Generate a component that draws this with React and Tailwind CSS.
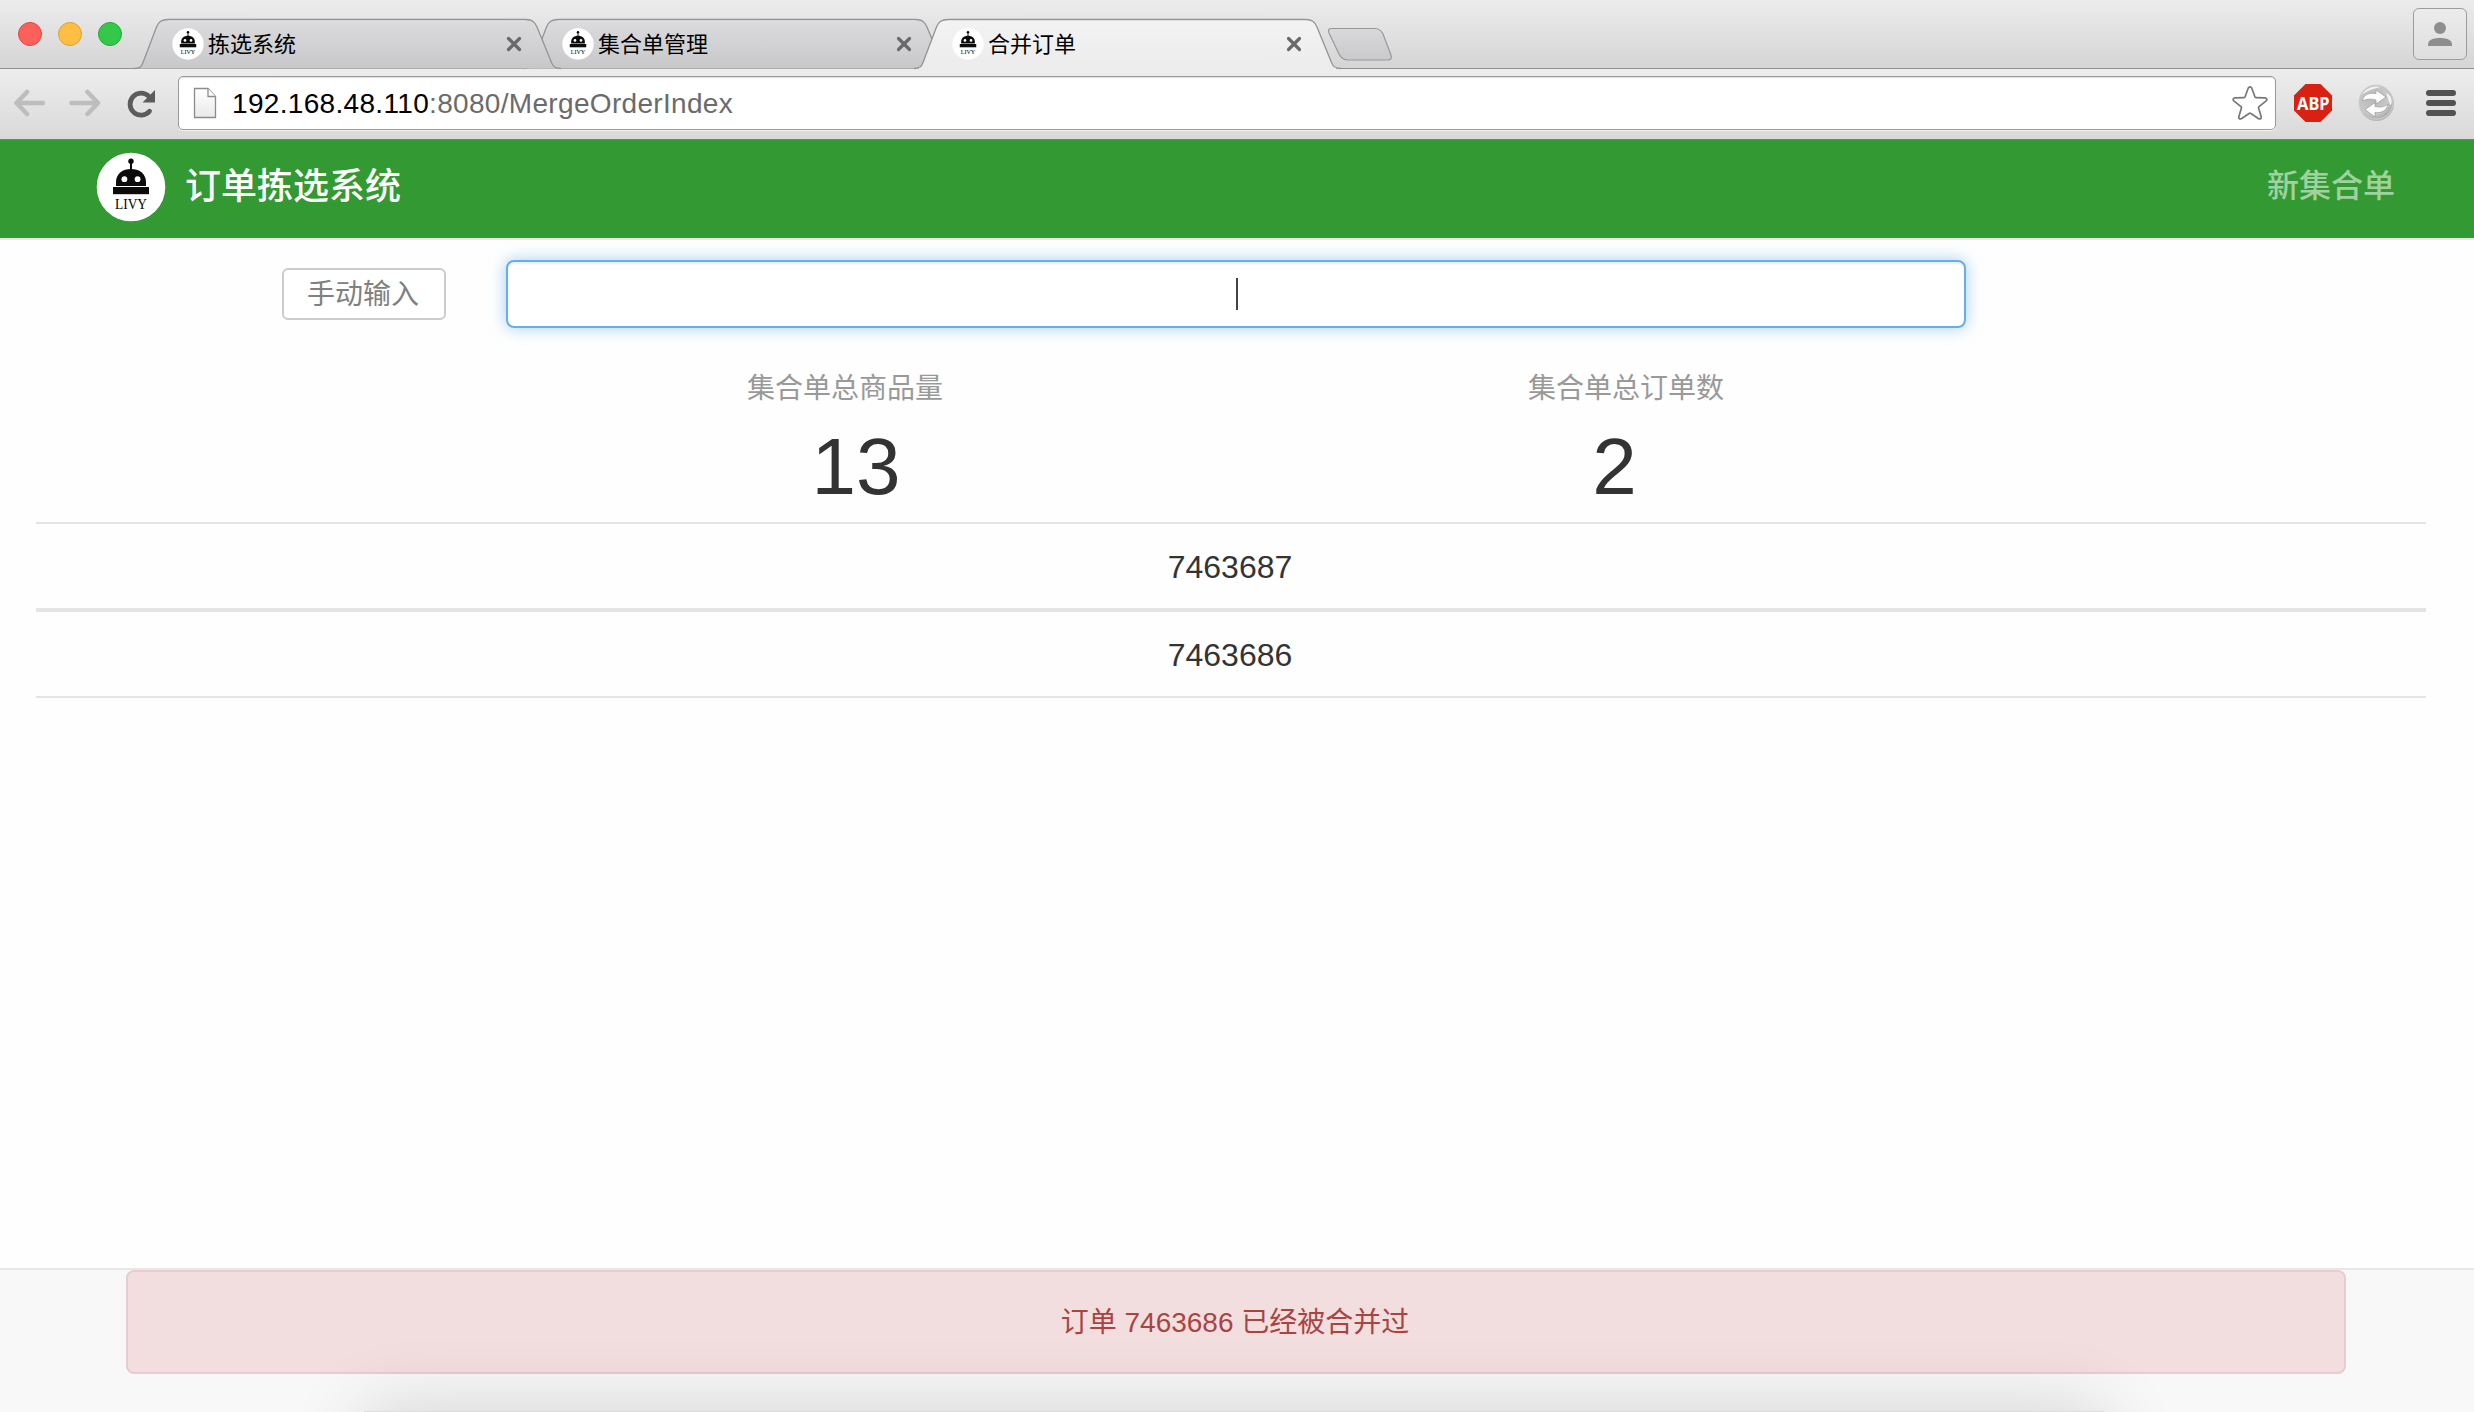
const CJK = "font-['Liberation_Sans','Noto_Sans_CJK_SC',sans-serif]";

function RobotLogo({ className }) {
  return (
    <svg viewBox="0 0 70 70" className={className}>
      <circle cx="35" cy="35" r="34.3" fill="#fff" />
      <circle cx="35" cy="9.3" r="2.7" fill="#0b0b0b" />
      <rect x="34" y="9" width="2" height="10" fill="#0b0b0b" />
      <path d="M20 34V30C20 21.500 27 17 35 17S50 21.500 50 30V34Z" fill="#0b0b0b" />
      <rect x="17" y="35" width="36" height="7.200" fill="#0b0b0b" />
      <circle cx="28.400" cy="27.200" r="2.900" fill="#fff" />
      <circle cx="41.600" cy="27.200" r="2.900" fill="#fff" />
      <text x="35" y="57" textAnchor="middle" fontSize="15" textLength="32" lengthAdjust="spacingAndGlyphs" fill="#000" fontFamily="Liberation Serif, serif">LIVY</text>
    </svg>
  );
}

const TAB_LINE = "M-4 49.5C2 49.5 3.500 47.500 5 43.500L18.500 8C20.800 2.500 23.500 .5 30 .5H388C394 .5 396.500 2.500 399 8L413.500 43.500C415 47.500 417 49.5 423 49.5";

function Tab({ title, active, layer }) {
  const id = active ? "tab-active" : "tab-idle";
  return (
    <div className={"relative flex h-[50px] w-[390px] shrink-0 items-center pl-[34px] " + layer}>
      <svg width="424" height="51" viewBox="0 0 424 51" className="absolute top-0 left-0 overflow-visible">
        <defs>
          <linearGradient id={id} x1="0" y1="0" x2="0" y2="1">
            <stop offset="0" stopColor={active ? "#f3f3f3" : "#dcdcde"} />
            <stop offset="1" stopColor={active ? "#ececec" : "#c8c8ca"} />
          </linearGradient>
        </defs>
        <path d={TAB_LINE + "Z"} fill={`url(#${id})`} />
        <path d="M30 1.800H388" stroke="#fff" strokeOpacity=".5" />
        <path d={TAB_LINE} fill="none" stroke="#949496" strokeWidth="1.300" />
        {active && <path d="M1 50H418" stroke="#ececec" strokeWidth="2.500" />}
      </svg>
      <RobotLogo className="relative size-8" />
      <span className="relative mt-px ml-1 w-[290px] text-[22px] leading-[22px] whitespace-nowrap text-black">{title}</span>
      <svg width="16" height="16" viewBox="0 0 16 16" className="relative ml-[8px] shrink-0">
        <path d="M2.500 2.500L13.500 13.500M13.500 2.500L2.500 13.500" stroke="#696969" strokeWidth="3.200" strokeLinecap="round" />
      </svg>
    </div>
  );
}

function TitleBar() {
  return (
    <div className="flex h-[69px] items-start border-b border-[#909090] bg-linear-to-b from-[#ececec] to-[#d5d5d5]">
      <div className="flex w-[138px] shrink-0 gap-4 pt-[22px] pl-[18px]">
        <div className="size-6 rounded-full border border-[#e2463f] bg-[#fc605b]" />
        <div className="size-6 rounded-full border border-[#dfa032] bg-[#fdbe41]" />
        <div className="size-6 rounded-full border border-[#1fab31] bg-[#34c84a]" />
      </div>
      <div className="isolate flex pt-[19px]">
        <Tab title="拣选系统" layer="z-20" />
        <Tab title="集合单管理" layer="z-10" />
        <Tab title="合并订单" active layer="z-30" />
      </div>
      <svg width="66" height="34" viewBox="0 0 66 34" className="mt-[27px] ml-[19px]">
        <defs>
          <linearGradient id="plus-tab" x1="0" y1="0" x2="0" y2="1">
            <stop offset="0" stopColor="#d9d9db" />
            <stop offset="1" stopColor="#cacacc" />
          </linearGradient>
        </defs>
        <path d="M4.500 1.500H47C52 1.500 54 3 56 7L64 28C65 31 64 33 61 33H21C16 33 14 31 12 27L2 6C1 3 1.500 1.500 4.500 1.500Z" fill="url(#plus-tab)" stroke="#98989a" strokeWidth="1.200" />
      </svg>
      <div className="mt-2 mr-[7px] ml-auto flex h-[52px] w-[54px] items-center justify-center rounded-md border border-[#9c9c9c] bg-linear-to-b from-[#ececec] to-[#dedede]">
        <svg width="24" height="24" viewBox="0 0 24 24" fill="#8e8e8e">
          <circle cx="12" cy="6" r="6" />
          <path d="M0 24V22.500C0 18 5 16 12 16S24 18 24 22.500V24Z" />
        </svg>
      </div>
    </div>
  );
}

function Toolbar() {
  return (
    <div className="flex h-[71px] items-start border-b border-[#7c7c7c] bg-linear-to-b from-[#ededed] to-[#d9d9d9]">
      <div className="flex w-[178px] shrink-0 pt-[20px] pl-[13px]">
        <svg width="32" height="28" viewBox="0 0 32 28" fill="none" stroke="#bdbdbd" strokeWidth="4.500" strokeLinecap="round" strokeLinejoin="round">
          <path d="M30 14H4M14 3L3.500 14L14 25" />
        </svg>
        <svg width="32" height="28" viewBox="0 0 32 28" className="ml-[24px]" fill="none" stroke="#bdbdbd" strokeWidth="4.500" strokeLinecap="round" strokeLinejoin="round">
          <path d="M2.500 14H28M18.500 3L29 14L18.500 25" />
        </svg>
        <svg width="30" height="30" viewBox="0 0 30 30" className="ml-[26px]">
          <path d="M22.500 22.200A11 11 0 1 1 21.500 7" fill="none" stroke="#5c5c5c" strokeWidth="4.800" strokeLinecap="round" />
          <path d="M28 1V13.500H15.500Z" fill="#5c5c5c" />
        </svg>
      </div>
      <div className="mt-[7px] flex h-[54px] w-[2098px] items-center rounded-[5px] border border-[#9a9a9a] bg-white shadow-[inset_0_1px_1px_#ddd,0_1px_0_#f2f2f2]">
        <svg width="24" height="32" viewBox="0 0 24 32" className="ml-[14px]">
          <defs>
            <linearGradient id="sheet" x1="0" y1="0" x2="0" y2="1">
              <stop offset="0" stopColor="#fff" />
              <stop offset="1" stopColor="#e9e9ec" />
            </linearGradient>
          </defs>
          <path d="M1.500 1.500H15L22.500 9.500V30.500H1.500Z" fill="url(#sheet)" stroke="#8c8c8c" strokeWidth="1.300" />
          <path d="M15 1.500V9.500H22.500" fill="#fff" stroke="#8c8c8c" strokeWidth="1.300" />
        </svg>
        <div className="mt-[2px] ml-[15px] text-[28px] leading-none tracking-[0.32px] whitespace-nowrap text-[#6b6b6b]">
          <span className="text-black">192.168.48.110</span>:8080/MergeOrderIndex
        </div>
        <svg width="36" height="36" viewBox="0 0 36 36" className="mr-[7px] ml-auto" fill="#fff" stroke="#777" strokeWidth="1.700" strokeLinejoin="round">
          <path d="M16.200 3.200C17 1.300 19 1.300 19.800 3.200L22.900 11.800C23.100 12.400 23.400 12.600 24 12.600L32.800 12.900C35 13 35.500 14.800 33.900 16.200L27 21.600C26.500 22 26.400 22.400 26.600 23L29.100 31.500C29.600 33.600 28.200 34.600 26.300 33.500L18.900 28.500C18.300 28.100 17.700 28.100 17.100 28.500L9.700 33.500C7.800 34.600 6.400 33.600 6.900 31.500L9.400 23C9.600 22.400 9.500 22 9 21.600L2.100 16.200C.5 14.800 1 13 3.200 12.900L12 12.600C12.600 12.600 12.900 12.400 13.100 11.800Z" />
        </svg>
      </div>
      <svg width="40" height="40" viewBox="0 0 40 40" className="mt-[14px] ml-[17px]">
        <path d="M12.500 1H27.500L39 12.500V27.500L27.500 39H12.500L1 27.500V12.500Z" fill="#d92113" />
        <text x="20.300" y="26.500" textAnchor="middle" fontSize="18" fontWeight="700" textLength="32.500" lengthAdjust="spacingAndGlyphs" fill="#fff" fontFamily="Noto Sans, sans-serif">ABP</text>
      </svg>
      <svg width="40" height="40" viewBox="0 0 40 40" className="mt-[13px] ml-[23px]">
        <defs>
          <radialGradient id="globe" cx=".42" cy=".4" r=".62">
            <stop offset="0" stopColor="#b8b8b8" />
            <stop offset=".75" stopColor="#c8c8c8" />
            <stop offset="1" stopColor="#a8a8a8" />
          </radialGradient>
        </defs>
        <circle cx="20.500" cy="21.500" r="17.500" fill="#a8a8a8" opacity=".7" />
        <circle cx="20" cy="20" r="17" fill="url(#globe)" stroke="#d0d0d0" />
        <path d="M6 13C9 6 18 3 25 5C19 6 12 8 6 13ZM30 11C35 13 37 18 35 23C33 22 33 18 30 11Z" fill="#f2f2f2" />
        <path d="M6.500 19C7 13 12 10.500 20 11.500V8L30 15L20 22V18C14 16.500 10 17 6.500 19Z" fill="#fcfcfc" stroke="#999" strokeWidth=".7" />
        <path d="M32 22C31.500 28 26 31.500 19 30.500V35L9 27.500L19 20.500V24.500C24 25.500 28.500 25 32 22Z" fill="#fcfcfc" stroke="#999" strokeWidth=".7" />
      </svg>
      <div className="mt-[21px] ml-[30px] flex w-[30px] flex-col gap-1">
        <div className="h-1.5 rounded-full bg-[#525252]" />
        <div className="h-1.5 rounded-full bg-[#525252]" />
        <div className="h-1.5 rounded-full bg-[#525252]" />
      </div>
    </div>
  );
}

function Stat({ label, value, className }) {
  return (
    <div className={"flex w-[200px] flex-col items-center " + className}>
      <div className="mt-px text-[28px] leading-[40px] whitespace-nowrap text-[#999]">{label}</div>
      <div className="mt-[14px] text-[80px] leading-[88px] text-[#333]">{value}</div>
    </div>
  );
}

export default function App() {
  return (
    <div className={"relative flex h-[1412px] w-[2474px] flex-col overflow-hidden bg-[#fefefe] " + CJK}>
      <TitleBar />
      <Toolbar />
      <header className="flex h-[100px] shrink-0 items-center border-b-2 border-[#e7e7e7] bg-[#339933] pr-[79px] pl-[96px]">
        <RobotLogo className="mt-[-4px] size-[70px]" />
        <h1 className="mt-[-4px] ml-[19px] text-[36px] leading-none font-medium text-white">订单拣选系统</h1>
        <a className="mt-[-7px] ml-auto text-[32px] leading-none font-medium text-[#a0d2a0]">新集合单</a>
      </header>

      <main className="flex flex-1 flex-col">
        <div className="mt-[20px] flex h-[68px] items-center pl-[282px]">
          <button className="flex h-[52px] w-[164px] items-center justify-center rounded-md border-2 border-[#ccc] bg-white pt-[2px] pr-[2px] text-[28px] leading-none text-[#808080]">手动输入</button>
          <div className="ml-[60px] flex h-[68px] w-[1460px] items-center justify-center rounded-lg border-2 border-[#66afe9] bg-white pl-[2px] shadow-[inset_0_2px_2px_rgba(0,0,0,0.075),0_0_16px_rgba(102,175,233,0.6)]">
            <div className="h-8 w-0.5 bg-[#444]" />
          </div>
        </div>

        <div className="mt-[40px] flex h-[154px]">
          <Stat label="集合单总商品量" value={<span className="ml-[22px]">13</span>} className="ml-[745px]" />
          <Stat label="集合单总订单数" value={<span className="mr-[23px]">2</span>} className="ml-[581px]" />
        </div>

        <div className="mr-[48px] ml-[36px] text-[32px] leading-none text-[#333]">
          <div className="flex h-[88px] items-center justify-center border-y-2 border-[#e4e4e4] pt-[2px] pr-[2px]">7463687</div>
          <div className="flex h-[88px] items-center justify-center border-y-2 border-[#e4e4e4] pt-[2px] pr-[2px]">7463686</div>
        </div>
      </main>

      <footer className="h-[144px] shrink-0 border-t-2 border-[#e7e7e7] bg-[#f8f8f8] pr-[128px] pl-[126px]">
        <div className="flex h-[104px] items-center justify-center rounded-lg border-2 border-[#e9cbd0] bg-[#f2dede] pt-[2px] pr-[2px] text-[28px] leading-none text-[#a94442]">订单 7463686 已经被合并过</div>
      </footer>
      <div className="absolute top-[1411px] left-[364px] h-[200px] w-[1740px] bg-[#dedede] shadow-[0_0_76px_rgba(0,0,0,0.16)]" />
    </div>
  );
}
